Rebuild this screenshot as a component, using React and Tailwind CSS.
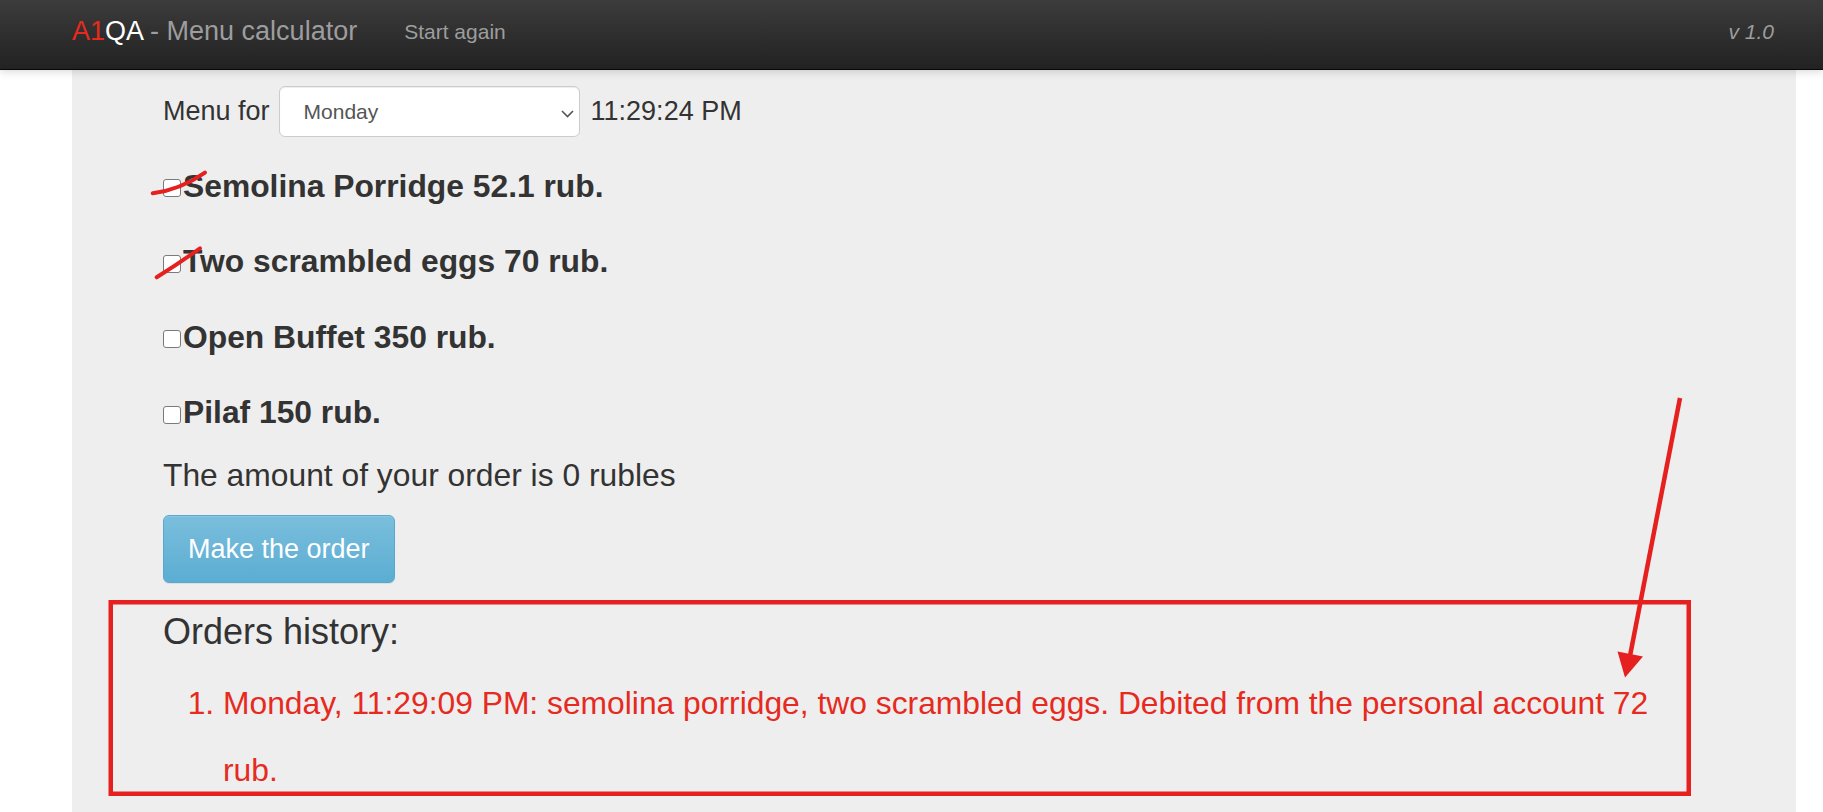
import React from "react";

const items = [
  "Semolina Porridge 52.1 rub.",
  "Two scrambled eggs 70 rub.",
  "Open Buffet 350 rub.",
  "Pilaf 150 rub.",
];

export default function App() {
  return (
    <div className="relative min-h-[812px] h-[812px] overflow-hidden bg-white flex flex-col font-['Liberation_Sans',Arial,sans-serif]">
      <header className="relative z-10 h-[70px] shrink-0 bg-linear-to-b from-[#3c3c3c] to-[#222222] border-b border-[#080808] flex items-center pb-[6px] pl-[72px] pr-[49px] shadow-[0_2px_8px_rgba(0,0,0,0.15)]">
        <span className="text-[27px] leading-none">
          <span className="text-[#e62a1e]">A1</span>
          <span className="text-white">QA</span>
          <span className="text-[#9d9d9d]"> - Menu calculator</span>
        </span>
        <span className="ml-[47px] text-[21px] leading-none text-[#9d9d9d]">Start again</span>
        <span className="ml-auto text-[21px] leading-none italic text-[#9d9d9d]">v 1.0</span>
      </header>

      <main className="ml-[72px] w-[1724px] flex-1 bg-[#eeeeee] pt-[16px] pl-[91px] pr-[116px] text-[#333333]">
        <div className="flex items-center h-[51px] text-[27px]">
          <span>Menu for</span>
          <div className="ml-[9px] w-[301px] h-[51px] bg-white border-[1.5px] border-[#cccccc] rounded-[6px] flex items-center pl-[24px] pr-[5px] text-[21px] text-[#555555] shadow-[inset_0_1px_1px_rgba(0,0,0,0.075)]">
            <span className="flex-1">Monday</span>
            <svg width="13" height="8" viewBox="0 0 13 8" className="mt-[4px]">
              <path d="M1 1 L6.5 6.5 L12 1" fill="none" stroke="#555" strokeWidth="1.6" />
            </svg>
          </div>
          <span className="ml-[11px]">11:29:24 PM</span>
        </div>

        <div className="mt-[12px]">
          {items.map((t) => (
            <div key={t} className="h-[75.5px] flex items-center text-[31.8px] font-bold">
              <span className="inline-block w-[18px] h-[18px] mt-[3px] mr-[2px] bg-white border-[1.5px] border-[#7a7a7a] rounded-[3px]" />
              <span>{t}</span>
            </div>
          ))}
        </div>

        <div className="h-[50px] flex items-center text-[31.8px]">The amount of your order is 0 rubles</div>

        <button className="mt-[14px] h-[68px] px-[24px] rounded-[6px] border-[1.5px] border-[#5aa8cf] bg-linear-to-b from-[#7abedc] to-[#5badd3] text-white text-[27px] leading-none shadow-[inset_0_1px_0_rgba(255,255,255,0.15),0_1px_1px_rgba(0,0,0,0.075)]">
          Make the order
        </button>

        <h3 className="mt-[29px] text-[36px] leading-[39.6px]">Orders history:</h3>
        <ol className="mt-[18px] pl-[60px] list-decimal text-[31.8px] leading-[67px] text-[#e62a1e]">
          <li>
            Monday, 11:29:09 PM: semolina porridge, two scrambled eggs. Debited from the personal account 72 rub.
          </li>
        </ol>
      </main>

      <svg className="absolute inset-0 pointer-events-none" width="1823" height="812" viewBox="0 0 1823 812">
        <rect x="110.75" y="602.25" width="1578" height="191.5" fill="none" stroke="#e5201e" strokeWidth="4.5" />
        <line x1="1680" y1="398" x2="1630" y2="656" stroke="#e5201e" strokeWidth="4.5" />
        <polygon points="1617.5,651.5 1643,656.5 1625,677.5" fill="#e5201e" />
        <path d="M152.7 193.3 Q180 190 205 172.7" fill="none" stroke="#e5201e" strokeWidth="4" strokeLinecap="round" />
        <path d="M156.7 277.3 Q178 264 200 248.3" fill="none" stroke="#e5201e" strokeWidth="4" strokeLinecap="round" />
      </svg>
    </div>
  );
}
